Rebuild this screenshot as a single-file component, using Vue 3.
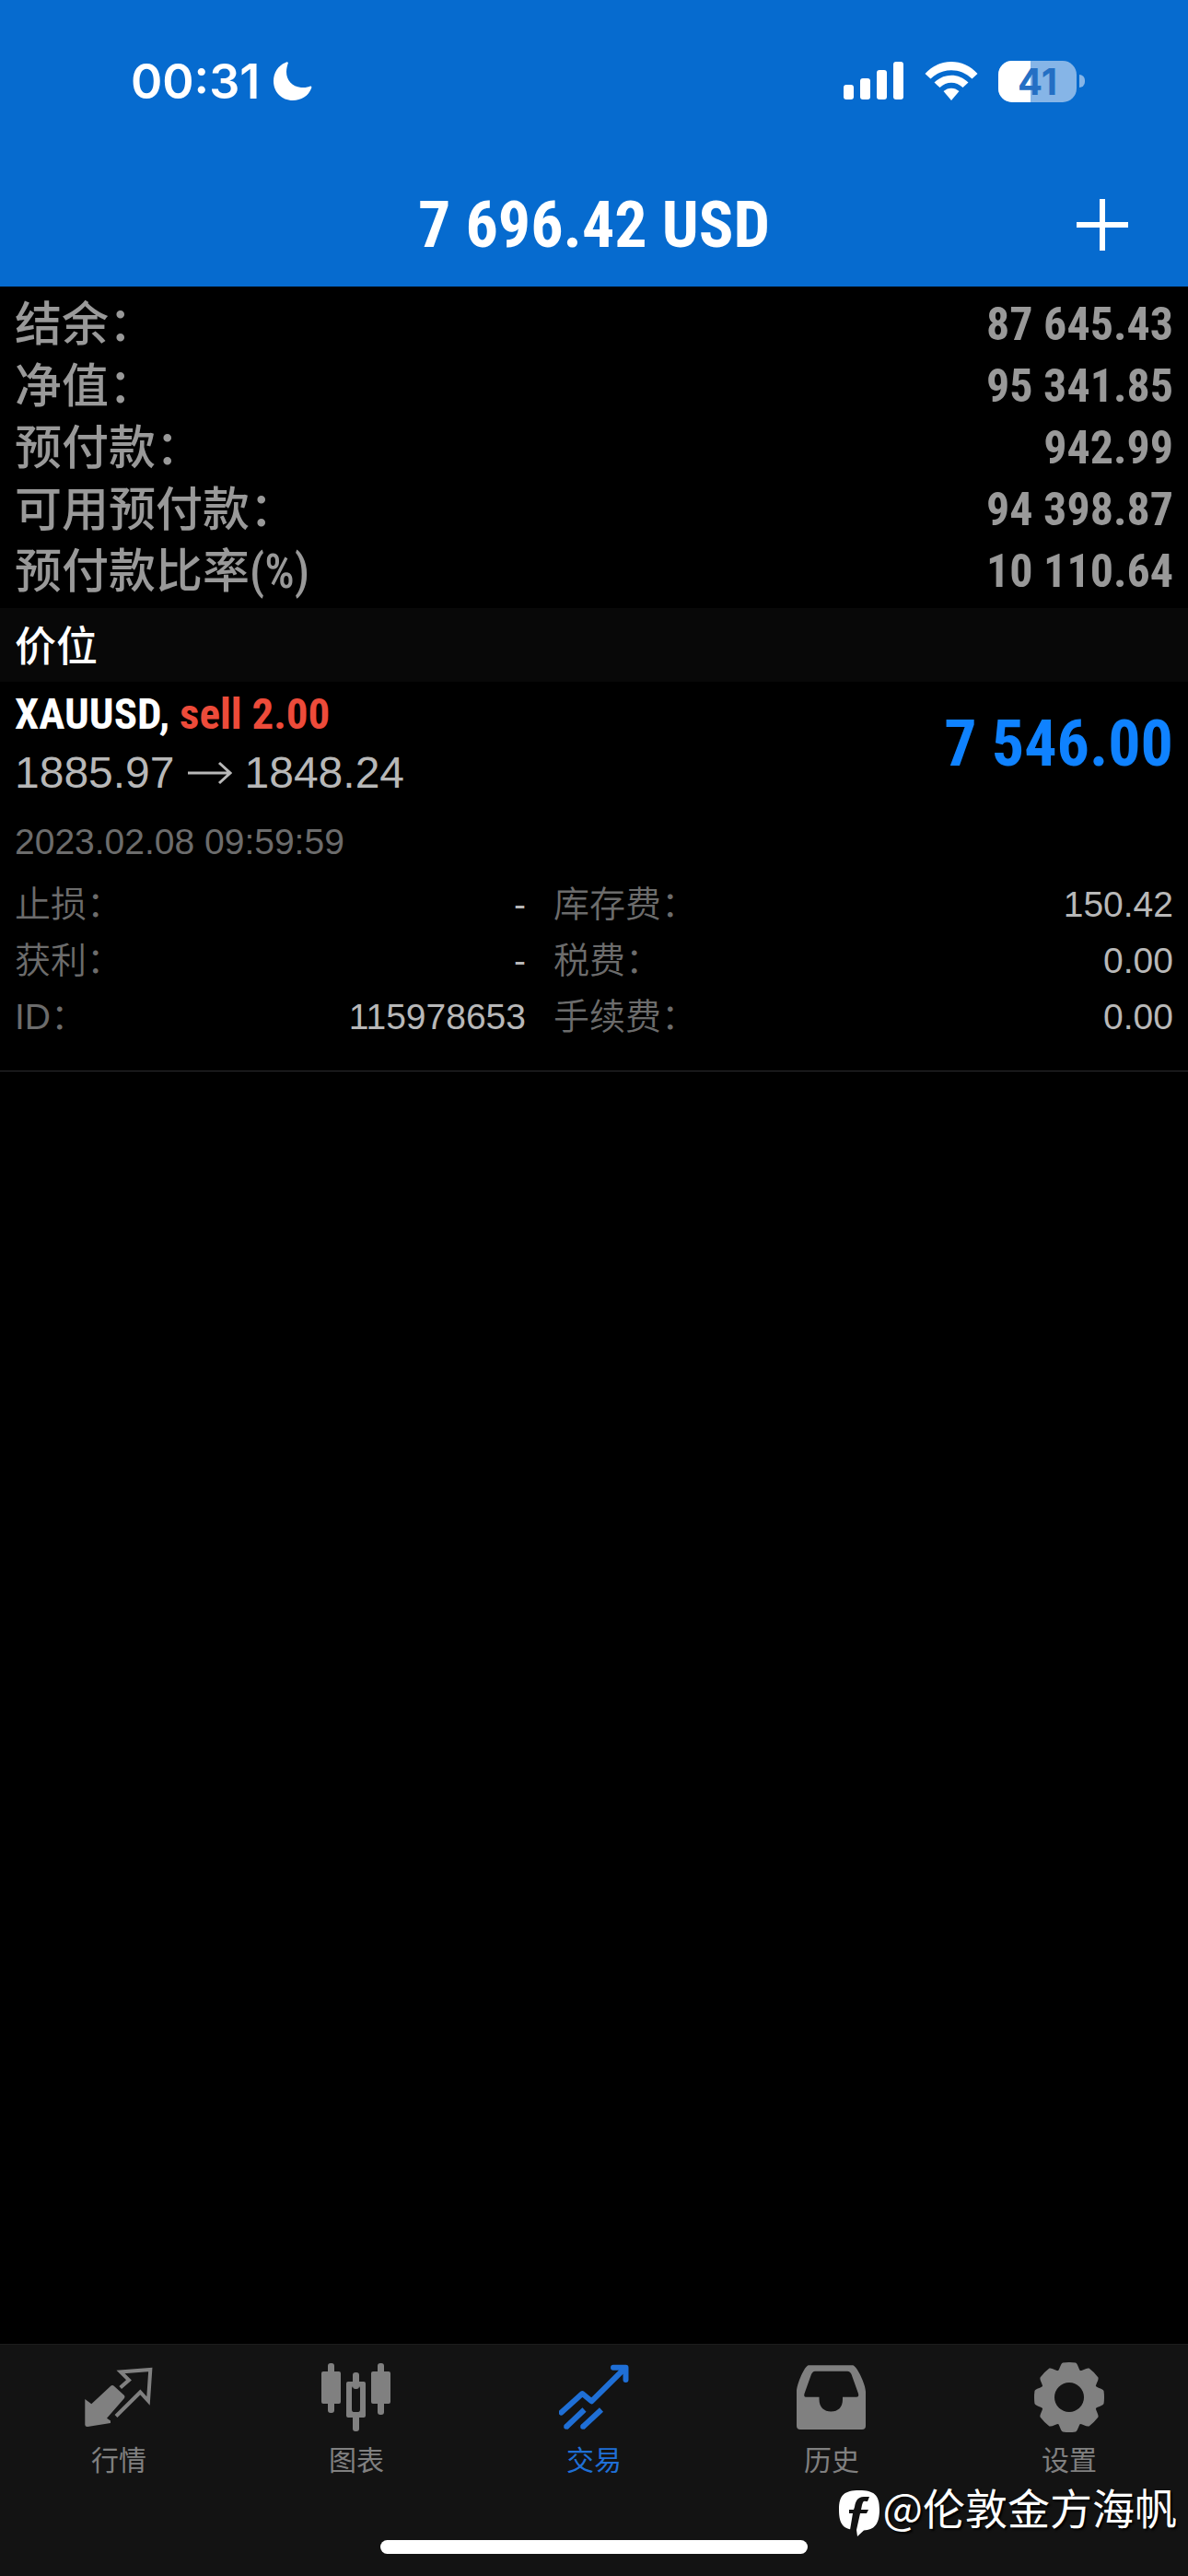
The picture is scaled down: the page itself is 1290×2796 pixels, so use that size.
<template>
  <div class="trade-app">
    <header class="app-header">
      <div class="status-bar">
        <div class="status-left">
          <span class="status-time">00:31</span>
          <svg class="icon-moon" viewBox="0 0 42 42" aria-hidden="true">
            <path
              d="M16 1C15 0 14 0 13 1C5 4 0 12 0 21C0 33 9 42 21 42C30 42 38 37 41 29C42 27 41 26 39 27C36 28 33 28 30 28C20 27 14 20 14 11C14 7 15 4 16 1Z"
            />
          </svg>
        </div>

        <div class="status-right">
          <svg class="icon-signal" viewBox="0 0 66 42" aria-hidden="true">
            <rect x="0" y="25" width="11" height="16" rx="3" />
            <rect x="18" y="18" width="11" height="23" rx="3" />
            <rect x="36" y="9" width="11" height="32" rx="3" />
            <rect x="54" y="0" width="11" height="41" rx="3" />
          </svg>

          <svg class="icon-wifi" viewBox="0 0 58 42" aria-hidden="true">
            <path d="M0.500 13C16-4.300 42-4.300 57.500 13L51.500 18.500C39 6 19 6 6.500 18.500Z" />
            <path d="M10.500 22.500C21 12 37 12 47.500 22.500L41.500 28C34 21 24 21 16.500 28Z" />
            <path d="M20.500 32C25.500 27.500 32.500 27.500 37.500 32L29 42Z" />
          </svg>

          <div class="battery">
            <div class="battery-body">
              <div class="battery-fill" :style="{ width: `${batteryLevel}%` }" />
              <span class="battery-text">{{ batteryLevel }}</span>
            </div>
            <div class="battery-nub" />
          </div>
        </div>
      </div>

      <div class="title-bar">
        <h1 class="title">7 696.42 USD</h1>

        <button type="button" class="add-button" aria-label="+">
          <svg viewBox="0 0 56 56" aria-hidden="true">
            <path d="M28 0V56M0 28H56" />
          </svg>
        </button>
      </div>
    </header>

    <main class="content">
      <dl class="summary">
        <div v-for="row in summaryRows" :key="row.label" class="summary-row">
          <dt>{{ row.label }}</dt>
          <dd>{{ row.value }}</dd>
        </div>
      </dl>

      <h2 class="section-title">价位</h2>

      <section class="position">
        <div class="position-main">
          <div>
            <div class="position-symbol">
              {{ position.symbol }}, <span class="position-side">{{ position.side }}</span>
            </div>
            <div class="position-price">
              <span>{{ position.open }}</span>
              <svg class="price-arrow" viewBox="0 0 48 26" aria-hidden="true">
                <path d="M0 13H46M34 2L46 13L34 24" />
              </svg>
              <span>{{ position.current }}</span>
            </div>
          </div>

          <div class="position-profit">{{ position.profit }}</div>
        </div>

        <div class="position-date">{{ position.date }}</div>

        <div class="position-details">
          <dl v-for="(column, index) in position.details" :key="index" class="detail-column">
            <div v-for="row in column" :key="row.label" class="detail-row">
              <dt>{{ row.label }}</dt>
              <dd>{{ row.value }}</dd>
            </div>
          </dl>
        </div>
      </section>
    </main>

    <footer class="tab-bar">
      <nav class="tab-list">
        <button
          v-for="tab in tabs"
          :key="tab.key"
          type="button"
          class="tab"
          :class="{ 'tab--active': activeTab === tab.key }"
          @click="activeTab = tab.key"
        >
          <svg class="tab-icon" viewBox="0 0 76 76" aria-hidden="true">
            <g v-if="tab.key === 'quotes'">
              <path
                class="fill"
                d="M1.300 40L8.300 45.300L29 26Q31 24 33 26L44 36Q45 37.300 44 39L25 60.700L29 63.500V66L4 70Q1.300 70 1.300 68Z"
              />
              <path
                class="line line--thin"
                d="M39.700 27.500L49 19.300L40 10.500L72.300 8L70 42L61.300 32.500L35 58.500"
              />
            </g>

            <g v-else-if="tab.key === 'chart'" class="fill">
              <rect x="7" y="1" width="7" height="54" rx="3" />
              <rect x="0" y="10" width="21" height="35" rx="2" />
              <rect x="61" y="1" width="7" height="56" rx="3" />
              <rect x="54" y="10" width="21" height="35" rx="2" />
              <rect x="34" y="11" width="7" height="18" rx="3" />
              <rect x="34" y="56" width="7" height="19" rx="3" />
              <path
                fill-rule="evenodd"
                d="M29 21H46Q48 21 48 23V58Q48 60 46 60H29Q27 60 27 58V23Q27 21 29 21ZM35 26Q33 26 33 29V51Q33 54 35 54H40Q42 54 42 51V29Q42 26 40 26Z"
              />
            </g>

            <g v-else-if="tab.key === 'trade'">
              <path class="line line--round" d="M2.500 54.500L25.300 34L35.300 42.300L70 8" />
              <path class="line line--round" d="M59 5.700H72.500V19" />
              <path class="fill" d="M62 5H73V16Z" />
              <path class="line" d="M7.500 70.500L27.500 51.500M25.500 70.500L46 51.500" />
              <circle class="fill" cx="8" cy="70" r="2.800" />
              <circle class="fill" cx="26" cy="70" r="2.800" />
            </g>

            <path
              v-else-if="tab.key === 'history'"
              class="fill"
              fill-rule="evenodd"
              d="M13 3.300H61C65 3.300 75 24 75 32V69Q75 73 71 73H4Q0 73 0 69V32C0 24 9 3.300 13 3.300ZM20 9.700C18 9.700 17 11 16 13L8.500 34Q7.500 37.700 10 37.700H24.500V40C24.500 49 30 53.500 37.300 53.500C45 53.500 50 49 50 40V37.700H65Q68 37.700 67 34L59.500 13C58.500 11 57.500 9.700 55 9.700Z"
            />

            <g v-else transform="translate(38 38)">
              <circle class="fill" r="30" />
              <path
                v-for="n in 8"
                :key="n"
                class="fill"
                :transform="`rotate(${n * 45})`"
                d="M-14-27C-10-29-10-36-7-37.500Q0-38.500 7-37.500C10-36 10-29 14-27Z"
              />
              <circle class="gear-hole" r="16" />
            </g>
          </svg>
          <span class="tab-label">{{ tab.label }}</span>
        </button>
      </nav>

      <div class="home-indicator" />

      <div class="watermark">
        <svg viewBox="0 0 44 50" aria-hidden="true">
          <path
            class="watermark-badge"
            d="M22 0C38 0 44 5 44 21C44 37 38 43 27 43.500L20 50L19 43C5 43 0 37 0 21C0 5 6 0 22 0Z"
          />
          <path
            class="watermark-mark"
            d="M33 7H27C20 7 18 12 17 18L16 21H11V25H15L12 43H19L23 25H30L32 21H24L25 16C26 12 27 11 29 12H31Z"
          />
        </svg>
        <span>@伦敦金方海帆</span>
      </div>
    </footer>
  </div>
</template>

<script setup>
import { ref } from 'vue'

const batteryLevel = 41

const activeTab = ref('trade')

const summaryRows = [
  { label: '结余：', value: '87 645.43' },
  { label: '净值：', value: '95 341.85' },
  { label: '预付款：', value: '942.99' },
  { label: '可用预付款：', value: '94 398.87' },
  { label: '预付款比率(%)', value: '10 110.64' },
]

const position = {
  symbol: 'XAUUSD',
  side: 'sell 2.00',
  open: '1885.97',
  current: '1848.24',
  profit: '7 546.00',
  date: '2023.02.08 09:59:59',
  details: [
    [
      { label: '止损：', value: '-' },
      { label: '获利：', value: '-' },
      { label: 'ID：', value: '115978653' },
    ],
    [
      { label: '库存费：', value: '150.42' },
      { label: '税费：', value: '0.00' },
      { label: '手续费：', value: '0.00' },
    ],
  ],
}

const tabs = [
  { key: 'quotes', label: '行情' },
  { key: 'chart', label: '图表' },
  { key: 'trade', label: '交易' },
  { key: 'history', label: '历史' },
  { key: 'settings', label: '设置' },
]
</script>

<style>
body {
  margin: 0;
  background: #000000;
}
</style>

<style scoped>
.trade-app {
  --condensed: 'Roboto Condensed', 'Liberation Sans';

  display: flex;
  flex-direction: column;
  min-height: 100vh;
  background: #000000;
  color: #ffffff;
  font-family: 'Liberation Sans', 'Noto Sans CJK SC', sans-serif;
}

h1,
h2,
dl,
dd {
  margin: 0;
}

button {
  padding: 0;
  border: none;
  background: none;
  font-family: inherit;
  cursor: pointer;
}

svg {
  display: block;
}

.app-header {
  background: #066bcf;
}

.status-bar {
  display: flex;
  align-items: center;
  justify-content: space-between;
  height: 176px;
  padding: 0 112px 0 142px;
  font-family: Inter, sans-serif;
}

.status-left,
.status-right {
  display: flex;
  align-items: center;
}

.status-left {
  gap: 15px;
}

.status-time {
  font-size: 52px;
  font-weight: 600;
}

.icon-moon {
  width: 42px;
  height: 42px;
  fill: #ffffff;
}

.icon-signal {
  width: 66px;
  height: 42px;
  margin-right: 22px;
  fill: #ffffff;
}

.icon-wifi {
  width: 58px;
  height: 42px;
  margin-right: 22px;
  fill: #ffffff;
}

.battery {
  display: flex;
  align-items: center;
  gap: 3px;
}

.battery-body {
  position: relative;
  width: 85px;
  height: 45px;
  border-radius: 15px;
  background: #86b5e7;
}

.battery-fill {
  height: 100%;
  border-radius: 15px 0 0 15px;
  background: #ffffff;
}

.battery-text {
  position: absolute;
  inset: 0;
  color: #246fc4;
  font-size: 40px;
  font-weight: 700;
  line-height: 45px;
  text-align: center;
}

.battery-nub {
  width: 6px;
  height: 14px;
  border-radius: 0 6px 6px 0;
  background: #86b5e7;
}

.title-bar {
  display: grid;
  grid-template-columns: 1fr auto 1fr;
  align-items: center;
  height: 135px;
  padding: 0 65px;
}

.title {
  grid-column: 2;
  font-family: var(--condensed), sans-serif;
  font-size: 70px;
  font-weight: 700;
  line-height: 80px;
}

.add-button {
  justify-self: end;
}

.add-button svg {
  width: 56px;
  height: 56px;
  stroke: #ffffff;
  stroke-width: 6;
}

.content {
  flex: 1;
}

.summary {
  padding: 8px 16px 6px;
  color: #999999;
  font-family: var(--condensed), 'Noto Sans CJK SC', sans-serif;
}

.summary-row {
  display: flex;
  justify-content: space-between;
  height: 67px;
  line-height: 67px;
}

.summary-row dt {
  font-size: 51px;
  font-weight: 500;
}

.summary-row dd {
  font-size: 50px;
  font-weight: 700;
}

.section-title {
  padding: 6px 16px 0;
  background: #080808;
  font-size: 45px;
  font-weight: 500;
  line-height: 74px;
}

.position {
  padding: 3px 16px 28px;
  border-bottom: 1px solid #2c2c2e;
}

.position-main {
  display: flex;
  align-items: center;
  justify-content: space-between;
  line-height: 64px;
}

.position-symbol {
  font-family: var(--condensed), sans-serif;
  font-size: 47px;
  font-weight: 700;
}

.position-side {
  color: #ed4b3a;
}

.position-price {
  display: flex;
  align-items: center;
  gap: 14px;
  color: #b8b8b8;
  font-size: 48px;
}

.price-arrow {
  width: 48px;
  height: 26px;
  fill: none;
  stroke: #b8b8b8;
  stroke-width: 3;
}

.position-profit {
  color: #0f82ff;
  font-family: var(--condensed), sans-serif;
  font-size: 70px;
  font-weight: 700;
}

.position-date {
  margin: 13px 0 7px;
  color: #6c6c6c;
  font-size: 39px;
  line-height: 60px;
}

.position-details {
  display: grid;
  grid-template-columns: 555px 1fr;
  gap: 30px;
}

.detail-row {
  display: flex;
  justify-content: space-between;
  height: 61px;
  font-size: 39px;
  line-height: 61px;
}

.detail-row dt {
  color: #6c6c6c;
  font-weight: 350;
}

.detail-row dd {
  color: #b8b8b8;
}

.tab-bar {
  position: relative;
  padding: 19px 0 24px;
  border-top: 1px solid #1d1d1d;
  background: #131313;
}

.tab-list {
  display: grid;
  grid-template-columns: repeat(5, 1fr);
}

.tab {
  display: flex;
  flex-direction: column;
  align-items: center;
  gap: 13px;
  color: #808080;
}

.tab--active {
  color: #1f6fd6;
}

.tab-icon {
  width: 76px;
  height: 76px;
}

.tab-icon .fill {
  fill: currentColor;
}

.tab-icon .line {
  fill: none;
  stroke: currentColor;
  stroke-width: 6;
}

.tab-icon .line--thin {
  stroke-width: 4;
}

.tab-icon .line--round {
  stroke-linecap: round;
  stroke-linejoin: round;
}

.tab-icon .gear-hole {
  fill: #131313;
}

.tab-label {
  font-size: 30px;
  line-height: 36px;
}

.home-indicator {
  width: 36%;
  height: 15px;
  margin: 68px auto 0;
  border-radius: 8px;
  background: #ffffff;
}

.watermark {
  position: absolute;
  right: 12px;
  bottom: 43px;
  display: flex;
  align-items: flex-end;
  gap: 3px;
  font-family: 'Noto Sans CJK SC', sans-serif;
  font-size: 46px;
  line-height: 66px;
  text-shadow: 2px 2px 2px #000000;
}

.watermark svg {
  width: 44px;
  height: 50px;
}

.watermark-badge {
  fill: #ffffff;
}

.watermark-mark {
  fill: #131313;
}
</style>
